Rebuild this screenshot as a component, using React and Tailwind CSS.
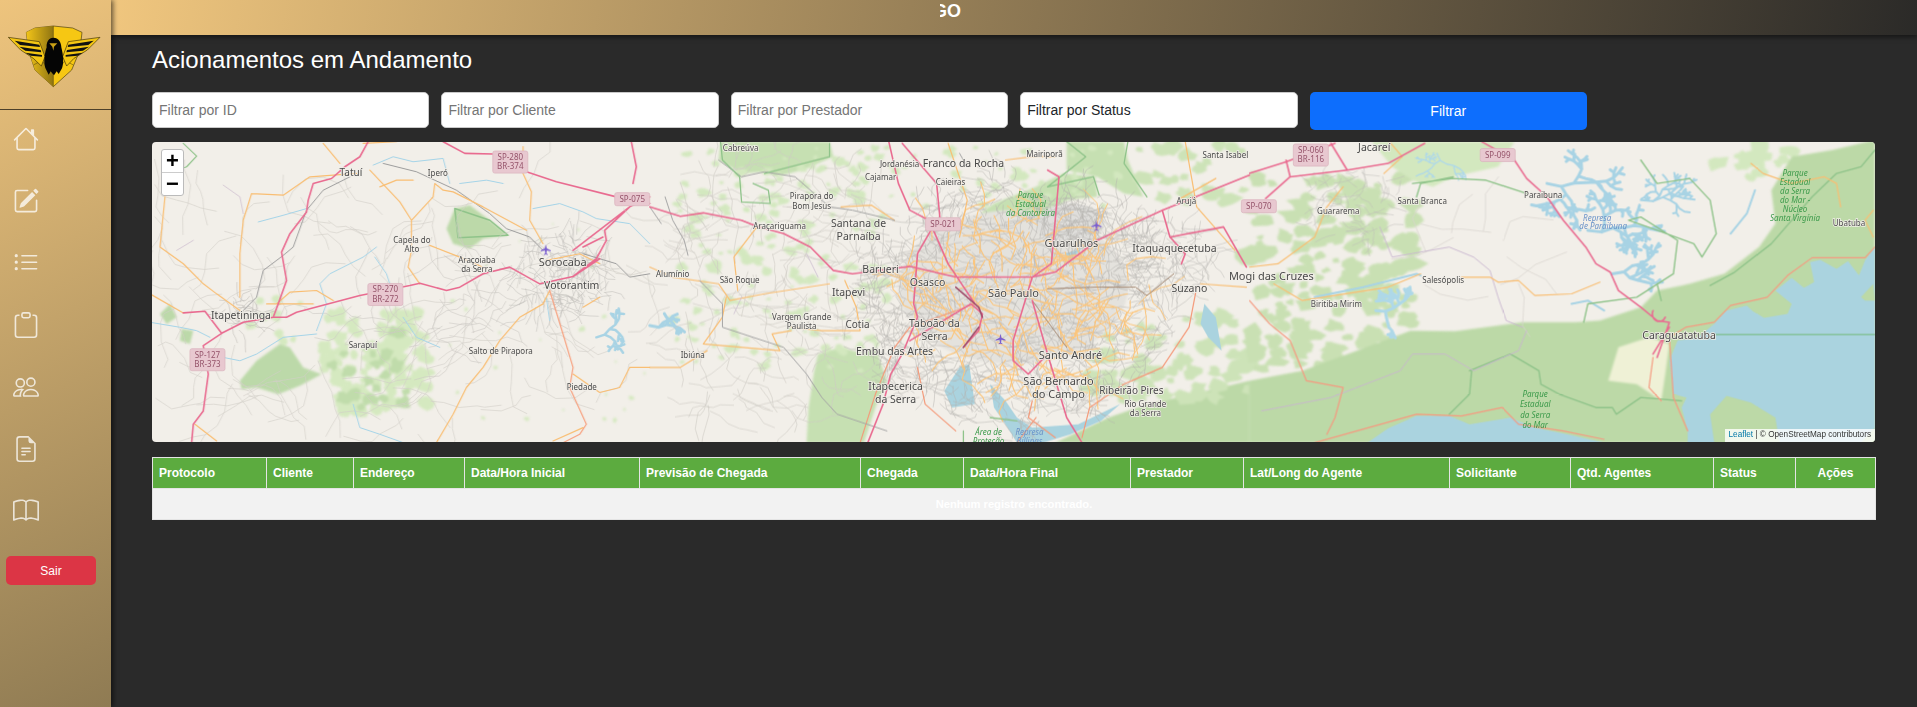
import { BsHouse, BsPencilSquare, BsListUl, BsClipboard, BsPeople, BsFileEarmarkText, BsBook } from 'react-icons/bs';

const Z8 = 'translate(150 140) scale(0.3333 0.3333)';
const Z9 = 'translate(650 140) scale(0.3827 0.3333)';
const Z10 = 'translate(1250 140) scale(0.408 0.3333)';

const LINE = 'fill-none [vector-effect:non-scaling-stroke] [stroke-linejoin:round] [stroke-linecap:round]';
const LABEL_FONT = "'Noto Sans', sans-serif";

// seeded random so the road web is the same on each load
function rng(seed) {
  let s = seed;
  return () => {
    s = (s * 16807) % 2147483647;
    return s / 2147483647;
  };
}

function blobPath(cx, cy, r, rand) {
  const n = 9;
  const pts = [];
  for (let i = 0; i < n; i++) {
    const a = (i / n) * Math.PI * 2;
    const k = 0.55 + rand() * 0.7;
    pts.push(`${(cx + Math.cos(a) * r * k).toFixed(0)} ${(cy + Math.sin(a) * r * k * 0.85).toFixed(0)}`);
  }
  return `M${pts.join('L')}Z`;
}

function blobs(seed, x0, y0, x1, y1, count, rMin, rMax) {
  const rand = rng(seed);
  let d = '';
  for (let i = 0; i < count; i++) {
    d += blobPath(x0 + rand() * (x1 - x0), y0 + rand() * (y1 - y0), rMin + rand() * (rMax - rMin), rand);
  }
  return d;
}

// wandering lines for the street web of the towns
function web(seed, cx, cy, rx, ry, count, steps, stepLen) {
  const rand = rng(seed);
  let d = '';
  for (let i = 0; i < count; i++) {
    const a = rand() * Math.PI * 2;
    const r = Math.sqrt(rand());
    let x = cx + Math.cos(a) * r * rx;
    let y = cy + Math.sin(a) * r * ry;
    let dir = rand() * Math.PI * 2;
    d += `M${x.toFixed(0)} ${y.toFixed(0)}`;
    for (let j = 0; j < steps; j++) {
      dir += (rand() - 0.5) * 1.5;
      x += Math.cos(dir) * stepLen * (0.5 + rand());
      y += Math.sin(dir) * stepLen * (0.5 + rand());
      d += `L${x.toFixed(0)} ${y.toFixed(0)}`;
    }
  }
  return d;
}

// branching arms for rivers and reservoirs
function branches(seed, x, y, angle, len, depth) {
  const rand = rng(seed);
  const grow = (px, py, a, l, n) => {
    const nx = px + Math.cos(a) * l;
    const ny = py + Math.sin(a) * l;
    let d = `M${px.toFixed(0)} ${py.toFixed(0)}L${nx.toFixed(0)} ${ny.toFixed(0)}`;
    if (n > 0) {
      d += grow(nx, ny, a + (rand() - 0.5) * 1.1, l * 0.9, n - 1);
      if (rand() > 0.25) d += grow(nx, ny, a + (rand() > 0.5 ? 1 : -1) * (0.7 + rand() * 0.8), l * 0.75, n - 1);
    }
    return d;
  };
  return grow(x, y, angle, len, depth);
}

const SHIELDS = [
  [510, 162, 'SP-280', 'BR-374'],
  [385, 294, 'SP-270', 'BR-272'],
  [207, 359, 'SP-127', 'BR-373'],
  [1311, 155, 'SP-060', 'BR-116'],
];
const SHIELDS_ONE = [
  [632, 199, 'SP-075'],
  [943, 224, 'SP-021'],
  [1259, 206, 'SP-070'],
  [1498, 155, 'SP-099'],
];

const LABELS = [
  ['Tatuí', 351, 172, 10],
  ['Iperó', 438, 173, 8],
  ['Capela do', 412, 240, 8],
  ['Alto', 412, 249, 8],
  ['Araçoiaba', 477, 260, 8],
  ['da Serra', 477, 269, 8],
  ['Sorocaba', 563, 262, 11],
  ['Votorantim', 572, 285, 10.5],
  ['Itapetininga', 241, 315, 10.5],
  ['Sarapuí', 363, 345, 8],
  ['Salto de Pirapora', 501, 351, 8],
  ['Piedade', 582, 386, 8],
  ['Cabreúva', 741, 148, 8],
  ['Jordanésia', 900, 164, 8],
  ['Franco da Rocha', 964, 163, 10.5],
  ['Cajamar', 881, 177, 8],
  ['Caieiras', 951, 182, 8],
  ['Mairiporã', 1045, 154, 8],
  ['Santa Isabel', 1226, 155, 8],
  ['Pirapora do', 812, 196, 8],
  ['Bom Jesus', 812, 206, 8],
  ['Santana de', 859, 223, 10.5],
  ['Parnaíba', 859, 236, 10.5],
  ['Araçariguama', 780, 226, 8],
  ['Arujá', 1187, 201, 8],
  ['Guarulhos', 1072, 243, 11],
  ['Itaquaquecetuba', 1175, 248, 10.5],
  ['Barueri', 881, 269, 10.5],
  ['Osasco', 928, 282, 10.5],
  ['São Paulo', 1014, 293, 11],
  ['Mogi das Cruzes', 1272, 276, 11],
  ['Suzano', 1190, 288, 10.5],
  ['Alumínio', 673, 274, 8],
  ['São Roque', 740, 280, 8],
  ['Itapevi', 849, 292, 10.5],
  ['Vargem Grande', 802, 317, 8],
  ['Paulista', 802, 326, 8],
  ['Cotia', 858, 324, 10],
  ['Taboão da', 935, 323, 10.5],
  ['Serra', 935, 336, 10.5],
  ['Embu das Artes', 895, 351, 10.5],
  ['Ibiúna', 693, 354, 8],
  ['Santo André', 1071, 354, 11],
  ['Itapecerica', 896, 386, 10.5],
  ['da Serra', 896, 398, 10.5],
  ['São Bernardo', 1059, 380, 11],
  ['do Campo', 1059, 393, 11],
  ['Ribeirão Pires', 1132, 390, 10],
  ['Rio Grande', 1146, 403, 8],
  ['da Serra', 1146, 412, 8],
  ['Jacareí', 1375, 147, 10.5],
  ['Paraibuna', 1544, 195, 8],
  ['Santa Branca', 1423, 201, 8],
  ['Guararema', 1339, 211, 8],
  ['Salesópolis', 1444, 280, 8],
  ['Biritiba Mirim', 1337, 304, 8],
  ['Caraguatatuba', 1680, 335, 10.5],
  ['Ubatuba', 1850, 223, 8],
];

const GREEN_LABELS = [
  ['Parque', 1031, 195],
  ['Estadual', 1031, 204],
  ['da Cantareira', 1031, 213],
  ['Parque', 1796, 173],
  ['Estadual', 1796, 182],
  ['da Serra', 1796, 191],
  ['do Mar -', 1796, 200],
  ['Núcleo', 1796, 209],
  ['Santa Virgínia', 1796, 218],
  ['Parque', 1536, 393],
  ['Estadual', 1536, 403],
  ['da Serra', 1536, 414],
  ['do Mar', 1536, 424],
  ['Área de', 989, 431],
  ['Proteção', 989, 440],
];

const BLUE_LABELS = [
  ['Represa', 1598, 218],
  ['de Paraibuna', 1604, 226],
  ['Represa', 1030, 431],
  ['Billings', 1030, 440],
];

function PlaneIcon({ x, y }) {
  return (
    <path
      transform={`translate(${x} ${y})`}
      d="M0-5L1-1L5 1V2L1 1L.6 4L2 5V5.6L0 5L-2 5.6V5L-.6 4L-1 1L-5 2V1L-1-1Z"
      fill="#7a5ed0"
    />
  );
}

function MapDrawing() {
  return (
    <svg viewBox="152 142 1724 299" preserveAspectRatio="none" className="block w-full h-full">
      <rect x="152" y="142" width="1724" height="299" fill="#f2efe9" />

      {/* land cover, soft like the upscaled tiles */}
      <g className="blur-[1px]">
        <g transform={Z8}>
          <path
            d="M270 720L320 660L390 610L420 620L460 680L515 700L450 735L385 760L320 740L275 745Z M915 205L960 195L1020 240L1075 285L1000 295L960 325L910 310L890 265Z M30 520L60 490L80 530L50 550Z M95 565L130 570L120 610L90 600Z"
            fill="#bcd9a9"
          />
          <path d={blobs(71, 520, 510, 830, 820, 110, 12, 30)} fill="#d5e9c0" />
          <path d={blobs(72, 550, 560, 780, 800, 22, 12, 28)} fill="#c0dcab" />
          <path d={blobs(73, 900, 240, 1500, 860, 26, 3, 10)} fill="#d5e9c0" />
          <path d={blobs(74, 300, 430, 460, 600, 10, 8, 20)} fill="#d5e9c0" />
        </g>
        <g transform={Z9}>
          <path
            d="M300 5L470 5L480 50L400 90L330 110L300 95L240 100L180 60L185 5Z M1090 5L1240 5L1250 60L1290 170L1240 160L1170 110L1090 90Z M850 230L900 190L1010 140L1080 100L1165 110L1170 170L1090 180L1040 220L1010 270L950 240L890 260Z M410 905L415 800L430 690L440 640L500 620L560 640L590 620L620 720L590 800L560 905Z"
            fill="#c6e0b2"
          />
          <path d="M1060 905L1200 830L1300 790L1420 760L1568 720L1568 905Z" fill="#bcd9a7" />
          <path d={blobs(21, 60, 20, 620, 700, 190, 6, 20)} fill="#d3e8bf" />
          <path d={blobs(22, 1150, 520, 1568, 770, 90, 10, 32)} fill="#cde3b8" />
          <path d={blobs(23, 620, 20, 1240, 200, 45, 6, 16)} fill="#d3e8bf" />
          <path d={blobs(24, 1280, 0, 1568, 180, 30, 10, 30)} fill="#cde3b8" />
          <ellipse cx="950" cy="440" rx="300" ry="230" fill="#e4e2dd" />
          <ellipse cx="1100" cy="250" rx="90" ry="60" fill="#dfdedb" />
        </g>
        <g transform={Z10}>
          <path d={blobs(41, 0, 110, 400, 700, 170, 10, 34)} fill="#c9e0b3" />
          <path d={blobs(42, 1150, 10, 1330, 120, 12, 14, 34)} fill="#d3e8bf" />
          <path
            d="M0 720L130 690L330 600L395 570L505 572L670 545L800 545L860 540L960 500L1000 450L1080 430L1165 400L1250 320L1290 250L1280 150L1330 50L1430 30L1534 0L1534 905L0 905Z"
            fill="#bcd9a7"
          />
          <path d="M300 5L650 5L610 80L500 110L450 140L400 120L350 80Z" fill="#d3e8bf" />
          <path d="M905 620L980 590L1030 610L1020 700L1010 780L950 730L880 720Z" fill="#eff1d6" />
        </g>
      </g>

      <g className="blur-[0.5px]">
        {/* west side */}
        <g transform={Z8}>
          <path d="M915 205L1020 240L1075 285L925 292Z" fill="none" stroke="#8fc38a" strokeWidth="1.5" className={LINE} />
          <path d="M100 10L140 48L110 80L70 95" stroke="#8fc38a" strokeWidth="1.2" className={LINE} />

          <path d={web(11, 500, 500, 1100, 400, 130, 5, 40)} stroke="#d2cec8" strokeWidth="0.6" className={LINE} />
          <path d={web(12, 1240, 400, 140, 130, 150, 3, 20)} stroke="#bdbab6" strokeWidth="0.5" className={LINE} />
          <path d={web(13, 280, 520, 60, 50, 30, 4, 14)} stroke="#c2bfbb" strokeWidth="0.6" className={LINE} />
          <path d={web(14, 860, 480, 260, 160, 40, 5, 30)} stroke="#cdcac5" strokeWidth="0.6" className={LINE} />

          {/* rivers */}
          <path
            d="M325 245L400 225L470 205 M670 75L730 50L790 65L880 55L900 130 M930 130L1010 120L1060 130M1150 205L1230 190L1300 215L1340 235L1440 250L1500 310 M680 320L640 350L540 400L510 430L530 490L500 570 M500 580L400 590L320 640L270 660L220 650 M0 545L90 560L140 570L180 590 M760 530L800 590L870 620 M675 350L710 400L720 430 M1190 470L1200 540 M610 790L630 860L690 880L760 905"
            stroke="#a5d4e8"
            strokeWidth="1"
            className={LINE}
          />
          <path d={branches(81, 1340, 590, -0.3, 26, 5)} stroke="#a8d3e4" strokeWidth="2.5" className={LINE} />
          {/* rail and boundary */}
          <path d="M700 70L800 95L920 150L1020 220L1070 265L1140 290L1180 330 M1300 340L1400 370L1440 410L1500 400 M600 110L520 150L470 210L430 320L400 345L340 390L320 470L280 510" stroke="#9d9d9d" strokeWidth="1" className={LINE} />
          <path d="M220 135L270 170L280 220M130 300L80 330" stroke="#cfc0d0" strokeWidth="0.8" className={LINE} />

          {/* secondary roads */}
          <path
            d="M45 170L30 320L100 370L160 430L200 460L270 510 M0 460L100 517 M305 160L280 240L270 340L270 470 M305 160L400 165L480 110L620 100 M520 10L570 70M660 90L750 185L785 240L850 170L855 130L880 150L910 155L1000 200L1130 270 M785 240L785 330L775 380L810 430 M840 315L930 350L1010 385 M1120 20L1120 100L1145 155L1140 240L1180 310 M1200 450L1180 490L1110 530L1050 600L1000 680L950 740L910 820L860 905 M640 10L740 5 M690 140L740 120L790 120 M1350 470L1300 500M1270 700L1350 755L1410 740L1440 680L1500 680 M1210 900L1300 860 M135 850L200 900 M380 490L420 455L500 450L550 480M350 490L490 490 M1190 360L1290 340L1350 370"
            stroke="#f9be73"
            strokeWidth="1.2"
            className={LINE}
          />
          <path d="M1200 450L1240 580L1270 680L1260 740L1310 850L1290 880L1240 905" stroke="#f7a07e" strokeWidth="1.2" className={LINE} />

          {/* motorways */}
          <path
            d="M655 5L630 50L585 80L545 115L490 130L475 180L470 215L420 280L395 335L410 420L385 490L370 530L280 545L215 578L160 615L175 700L160 810L130 850L125 905 M100 517L165 512L215 578 M370 530L410 530L440 515L630 465L780 435L810 428L890 450L930 440L1000 400L1080 380L1170 430L1270 408L1340 355L1370 300L1365 270L1440 200L1500 170 M880 5L945 40L1030 42 M1130 95L1220 125L1400 170L1500 190 M1445 5L1460 80L1450 130 M1270 330L1440 200 M1300 320L1360 290 M1350 355L1270 408"
            stroke="#e96b90"
            strokeWidth="1.6"
            className={LINE}
          />
        </g>

        {/* greater sao paulo */}
        <g transform={Z9}>
          <path d="M1450 490L1480 530L1495 630L1460 590L1440 550Z M810 680L835 670L845 750L850 790L790 800L770 750Z M890 730L930 780L960 830L1000 860L1120 850L1230 790L1180 840L1100 880L1030 905L960 905L930 850L900 800Z" fill="#aad3df" />
          <path d={branches(91, 0, 555, 0.2, 24, 4)} stroke="#a8d3e4" strokeWidth="3" className={LINE} />
          <path d="M1085 340L1130 325L1100 360Z" fill="#aad3df" />

          <path d={web(31, 320, 460, 330, 440, 170, 5, 26)} stroke="#cfcbc5" strokeWidth="0.6" className={LINE} />
          <path d={web(32, 950, 480, 420, 370, 900, 4, 18)} stroke="#b5b2ae" strokeWidth="0.5" className={LINE} />
          <path d={web(33, 1100, 250, 90, 60, 70, 4, 12)} stroke="#b5b2ae" strokeWidth="0.5" className={LINE} />
          <path d={web(34, 1310, 350, 170, 100, 110, 4, 20)} stroke="#bdbab6" strokeWidth="0.5" className={LINE} />
          <path d={web(35, 950, 480, 310, 280, 150, 4, 30)} stroke="#fbc57c" strokeWidth="1.1" className={LINE} />
          <path d={web(36, 1180, 480, 130, 180, 24, 4, 36)} stroke="#fbc57c" strokeWidth="1" className={LINE} />
          <path
            d="M0 380L60 410L180 430L210 480L300 460L470 430M200 470L190 530L140 610L340 630L320 580L370 570 M230 450L220 350L280 260M510 420L540 500L550 570L450 570L370 560M500 200L580 195L640 240M780 10L830 180L810 290M930 60L1000 50L1060 50M1440 430L1560 440M1400 5L1430 200L1530 330M1380 180L1480 115M0 680L80 680L150 630"
            stroke="#f9be73"
            strokeWidth="1.2"
            className={LINE}
          />
          <path d="M1430 440L1410 560L1340 680L1240 730L1150 800L1130 890 M550 905L590 760L640 620L680 560L850 490 M700 680L720 790L800 870M1000 780L990 830L1060 890M1010 830L960 905" stroke="#f49a7a" strokeWidth="1.2" className={LINE} />
          <path d="M180 60L240 110L300 95L380 110L470 200L530 210L640 240M0 200L30 250M40 170L60 240L90 300L100 345M130 420L190 490L190 560L350 620L410 700L450 770L490 820L620 870M810 40L825 70" stroke="#a5a5a5" strokeWidth="1" className={LINE} />
          <path d="M1040 445L1170 440L1270 440L1300 465L1370 400M1000 480L1090 620" stroke="#a58a75" strokeWidth="1" className={LINE} />
          <path d="M185 5L190 60L235 110L240 185L315 190L310 150L270 130M470 10L470 50L300 100M1090 5L1140 50L1085 100L1040 140L1160 110L1175 165 M1250 5L1240 70L1300 170M820 870L820 905M890 830L960 840" stroke="#8fc38a" strokeWidth="1.3" className={LINE} />
          <path d="M410 340L440 410M240 470L220 520" stroke="#cdbfd0" strokeWidth="0.8" className={LINE} />
          <path
            d="M0 200L80 228L140 218L240 240L280 258L350 280L420 320L480 390L530 400L680 378L800 410L1000 410L1060 395L1170 300L1340 210L1568 105M625 5L650 130L680 210L730 240L780 370M660 10L750 130L760 250M750 240L700 340L690 490L700 530L660 640L630 700L610 790L570 905M1000 410L1050 370L1070 110L1040 90M1340 210L1360 290L1400 340L1390 370M1360 290L1500 260L1560 380M680 600L840 490L870 520L860 570L820 620M780 370L850 490M1000 410L950 600L950 660L990 700L1040 640L1090 830L1130 905M1040 640L1000 480"
            stroke="#e96b90"
            strokeWidth="1.6"
            className={LINE}
          />
          <path d="M800 440L860 500L870 530M860 560L820 620" stroke="#a2506e" strokeWidth="1.6" className={LINE} />
        </g>

        {/* east side and coast */}
        <g transform={Z10}>
          <path
            d="M1534 320L1510 360L1495 405L1468 362L1440 385L1400 358L1375 365L1385 425L1360 442L1330 412L1290 450L1330 490L1320 520L1262 532L1235 512L1220 495L1170 510L1140 550L1100 590L1050 600L1030 660L1040 760L1072 770L1060 800L1075 870L1075 905L1534 905Z M290 905L340 862L410 825L490 825L540 850L640 830L700 860L780 880L870 905Z"
            fill="#aad3df"
          />
          <path d="M1140 905L1130 820L1170 765L1230 785L1290 830L1300 905Z" fill="#bcd9a7" />
          <path d="M1500 905L1534 905L1534 860Z" fill="#bcd9a7" />
          <path d="M1500 470L1530 430L1534 480L1510 480Z" fill="#bcd9a7" />
          <path d={branches(51, 730, 130, 0.25, 36, 7)} stroke="#a8d3e4" strokeWidth="3" className={LINE} />
          <path d={branches(52, 830, 270, 0.15, 34, 7)} stroke="#a8d3e4" strokeWidth="3" className={LINE} />
          <path d={branches(53, 890, 400, -0.2, 30, 6)} stroke="#a8d3e4" strokeWidth="3" className={LINE} />
          <path d={branches(56, 960, 180, 0.1, 30, 6)} stroke="#a8d3e4" strokeWidth="2" className={LINE} />
          <path d={branches(54, 460, 40, 1.2, 22, 6)} stroke="#aed8e8" strokeWidth="1.3" className={LINE} />
          <path d={branches(55, 310, 510, 0.1, 24, 6)} stroke="#aed8e8" strokeWidth="3" className={LINE} />
          <path d="M160 470L280 440L410 400L420 405M1240 150L1220 220L1180 280M790 490L830 480L870 510" stroke="#a8d3e4" strokeWidth="2" className={LINE} />
          <path d={web(61, 250, 200, 120, 120, 60, 3, 16)} stroke="#bfbcb8" strokeWidth="0.5" className={LINE} />
          <path d={web(62, 560, 300, 160, 180, 10, 3, 60)} stroke="#d8d4ce" strokeWidth="0.7" className={LINE} />
          <path d="M1140 582L1534 582" stroke="#84c29a" strokeWidth="1.5" className={LINE} />
          <path
            d="M400 130L500 115L580 120L680 160M820 545L830 490L950 470L1040 400L1050 300L960 230L930 240L1000 270L1090 310L1110 350L1145 280L1130 180L1080 115L1000 130L960 60M1000 430L1010 480M1130 435L1190 395L1280 310L1380 170L1440 100L1500 80L1534 30M500 110L420 130L410 170M540 690L640 640L710 690L715 730L760 760L850 800L890 800L900 820L960 770L1060 780M490 820L540 760L545 690"
            stroke="#8fc38a"
            strokeWidth="1.4"
            className={LINE}
          />
          <path d="M320 260L350 350L490 320L550 350L590 390L610 470L630 540L670 560M680 570L660 630L550 690L480 640L400 640L370 690L200 770L30 810" stroke="#c8b6cf" strokeWidth="0.9" className={LINE} />
          <path
            d="M520 410L590 410L610 425L660 420L700 465L790 460L860 425M0 380L70 370L160 290L190 200L230 140M340 0L375 50L330 100M60 430L130 480L340 440L420 400M1230 70L1260 100L1330 130L1410 110L1440 130L1450 200M1530 210L1510 240L1530 290"
            stroke="#f9be73"
            strokeWidth="1.2"
            className={LINE}
          />
          <path
            d="M0 480L50 550L100 600L140 720L230 740L210 830L190 880M160 905L410 820L520 825L620 800L660 850L770 870L870 895M1534 320L1510 352L1380 352L1320 405L1270 470L1180 495L1140 545L1070 560L1030 590L1040 770L1075 870M990 650L980 740L1010 780"
            stroke="#f59a80"
            strokeWidth="1.2"
            className={LINE}
          />
          <path
            d="M0 100L90 65L210 10M90 60L100 110L240 90L340 70L430 10M240 90L200 10M100 110L40 175M570 5L650 60L680 115L730 170L770 240L825 320L850 370L885 395L905 450L960 500L1000 540L1030 545L1000 650M990 510A15 20 0 1 0 1020 530M1030 560L990 640"
            stroke="#e96b90"
            strokeWidth="1.6"
            className={LINE}
          />
        </g>
      </g>

      <PlaneIcon x={546} y={249} />
      <PlaneIcon x={1097} y={225} />
      <PlaneIcon x={1001} y={338} />

      <g className="blur-[0.3px]">
        {SHIELDS.map(([x, y, a, b]) => (
          <g key={a}>
            <rect x={x - 17} y={y - 11} width="35" height="22" rx="2" fill="#e8c8d0" stroke="#dcb6c0" strokeWidth="0.8" />
            <text x={x + 0.5} y={y - 2} textAnchor="middle" fontSize="8" fill="#95536a" fontFamily={LABEL_FONT}>{a}</text>
            <text x={x + 0.5} y={y + 7} textAnchor="middle" fontSize="8" fill="#95536a" fontFamily={LABEL_FONT}>{b}</text>
          </g>
        ))}
        {SHIELDS_ONE.map(([x, y, a]) => (
          <g key={a}>
            <rect x={x - 17} y={y - 6.5} width="35" height="13" rx="2" fill="#e8c8d0" stroke="#dcb6c0" strokeWidth="0.8" />
            <text x={x + 0.5} y={y + 3} textAnchor="middle" fontSize="8" fill="#95536a" fontFamily={LABEL_FONT}>{a}</text>
          </g>
        ))}

        {LABELS.map(([t, x, y, s]) => (
          <text
            key={`${t}${x}`}
            x={x}
            y={y}
            dy="0.35em"
            textAnchor="middle"
            fontSize={s}
            fill="#4a4a4a"
            stroke="#f2efe9"
            strokeWidth="1.5"
            paintOrder="stroke"
            fontFamily={LABEL_FONT}
          >
            {t}
          </text>
        ))}
        {GREEN_LABELS.map(([t, x, y]) => (
          <text key={`${t}${x}${y}`} x={x} y={y} dy="0.35em" textAnchor="middle" fontSize="8" fontStyle="italic" fill="#3b9a4a" fontFamily={LABEL_FONT}>
            {t}
          </text>
        ))}
        {BLUE_LABELS.map(([t, x, y]) => (
          <text key={`${t}${x}`} x={x} y={y} dy="0.35em" textAnchor="middle" fontSize="8" fontStyle="italic" fill="#6b93c9" fontFamily={LABEL_FONT}>
            {t}
          </text>
        ))}
      </g>
    </svg>
  );
}

function Logo() {
  return (
    <svg viewBox="0 0 333 330" className="w-[111px] h-[110px]">
      <defs>
        <linearGradient id="shieldLeft" x1="0" x2="1">
          <stop offset="0" stopColor="#f2c418" />
          <stop offset="1" stopColor="#8f7412" />
        </linearGradient>
      </defs>
      <path d="M160 78L218 84L246 97L240 150L215 210L160 260L105 210L85 150L79 97L105 84Z" fill="#f6c713" stroke="#4a3c10" strokeWidth="2" />
      <path d="M160 78L105 84L79 97L85 150L105 210L160 260Z" fill="url(#shieldLeft)" />
      <path d="M160 78L160 260" stroke="#4a3c10" strokeWidth="1.5" />
      <path d="M100 195L125 182L160 222M220 195L196 182L160 222" stroke="#4a3c10" strokeWidth="1.5" fill="none" />
      <path d="M25 112L118 125L135 170L124 198L100 175L62 150Z" fill="#f4c614" stroke="#3f3208" strokeWidth="2" />
      <path d="M300 112L205 125L188 170L200 198L222 175L262 150Z" fill="#f4c614" stroke="#3f3208" strokeWidth="2" />
      <path d="M44 122L118 134L120 141L60 135Z M58 140L122 150L124 157L76 152Z M76 158L126 165L126 170L92 167Z" fill="#111" />
      <path d="M281 122L205 134L203 141L265 135Z M267 140L201 150L199 157L249 152Z M249 158L197 165L197 170L233 167Z" fill="#111" />
      <path d="M160 113C176 113 184 128 184 142C190 165 192 190 186 205L176 222L170 214L162 226L152 214L146 224L136 204C130 185 134 160 140 142C138 128 146 113 160 113Z" fill="#050505" />
      <path d="M148 130L172 130L162 140L160 152L157 140Z" fill="#c9a016" />
    </svg>
  );
}

const NAV = [BsHouse, BsPencilSquare, BsListUl, BsClipboard, BsPeople, BsFileEarmarkText, BsBook];

const COLUMNS = [
  ['Protocolo', 'w-[114px] text-left'],
  ['Cliente', 'w-[87px] text-left'],
  ['Endereço', 'w-[111px] text-left'],
  ['Data/Hora Inicial', 'w-[175px] text-left'],
  ['Previsão de Chegada', 'w-[221px] text-left'],
  ['Chegada', 'w-[103px] text-left'],
  ['Data/Hora Final', 'w-[167px] text-left'],
  ['Prestador', 'w-[113px] text-left'],
  ['Lat/Long do Agente', 'w-[206px] text-left'],
  ['Solicitante', 'w-[121px] text-left'],
  ['Qtd. Agentes', 'w-[143px] text-left'],
  ['Status', 'w-[82px] text-left'],
  ['Ações', 'w-[80px] text-center'],
];

const INPUT = 'w-[277.4px] h-[36px] px-[6px] bg-white rounded-[5px] border border-[#c9c9c9] text-sm text-[#212529] placeholder:text-[#757575] outline-none';

export default function App() {
  return (
    <div className="flex h-screen overflow-hidden bg-[#2a2a2a] font-['Liberation_Sans',Arial,sans-serif]">
      {/* Sidebar */}
      <aside className="w-[111px] shrink-0 flex flex-col bg-[linear-gradient(155deg,#eec47d,#8f7b53)] shadow-[2px_0_5px_rgba(0,0,0,0.6)] z-10">
        <div className="h-[110px] border-b border-[#4d4029] shrink-0">
          <Logo />
        </div>
        <nav className="flex flex-col pt-[16px] gap-[36px] pl-[13px]">
          {NAV.map((Icon, i) => (
            <Icon key={i} size={26} className="text-white/75" />
          ))}
        </nav>
        <button className="mt-[32px] ml-[6px] w-[90px] h-[29px] rounded-[5px] bg-[#dc3545] text-white text-xs">Sair</button>
      </aside>

      <div className="flex-1 min-w-0 flex flex-col">
        {/* Top bar */}
        <header className="h-[35px] shrink-0 pl-[829px] bg-[linear-gradient(100deg,#f0c67e,#2b2a28)] shadow-[0_2px_5px_rgba(0,0,0,0.5)]">
          <div className="w-[21px] overflow-hidden flex justify-end">
            <span className="text-white text-lg font-bold leading-[23px]">GO</span>
          </div>
        </header>

        <main className="pl-[41px] pr-[42px]">
          <h1 className="text-white text-2xl leading-[29px] mt-[10px]">Acionamentos em Andamento</h1>

          <div className="flex gap-[12px] mt-[18px] items-start">
            <input className={INPUT} placeholder="Filtrar por ID" />
            <input className={INPUT} placeholder="Filtrar por Cliente" />
            <input className={INPUT} placeholder="Filtrar por Prestador" />
            <div className="w-[277.4px] h-[36px] px-[6px] flex items-center bg-white rounded-[5px] border border-[#c9c9c9] text-sm text-[#212529]">
              Filtrar por Status
            </div>
            <button className="w-[277.4px] h-[38px] rounded-[5px] bg-[#0d6efd] text-white text-sm">Filtrar</button>
          </div>

          {/* Map */}
          <div className="relative mt-[12px] h-[300px] rounded-[4px] overflow-hidden">
            <MapDrawing />
            <div className="absolute left-[9px] top-[7px] w-[23px] rounded-[3px] bg-white border border-[#bbb] text-black">
              <div className="h-[23px] flex items-center justify-center border-b border-[#ccc] text-[22px] font-bold leading-none">+</div>
              <div className="h-[22px] flex items-center justify-center text-[22px] font-bold leading-none">−</div>
            </div>
            <div className="absolute right-0 bottom-0 h-[13px] pl-[4px] pr-[4px] flex items-center bg-white/80 text-[8.2px] text-[#333] whitespace-nowrap">
              <span className="text-[#0078a8]">Leaflet</span>
              <span>&nbsp;| © OpenStreetMap contributors</span>
            </div>
          </div>

          {/* Table */}
          <table className="mt-[15px] w-[1723px] table-fixed border-collapse text-xs">
            <thead>
              <tr className="h-[31px] bg-[#5cab3f]">
                {COLUMNS.map(([label, cls]) => (
                  <th key={label} className={`${cls} px-[6px] font-bold text-white border border-[#e4e4e4]`}>
                    {label}
                  </th>
                ))}
              </tr>
            </thead>
            <tbody>
              <tr className="h-[31px] bg-[#f2f2f2]">
                <td colSpan={13} className="text-center text-[11.2px] font-bold text-white border border-[#e4e4e4]">
                  Nenhum registro encontrado.
                </td>
              </tr>
            </tbody>
          </table>
        </main>
      </div>
    </div>
  );
}
